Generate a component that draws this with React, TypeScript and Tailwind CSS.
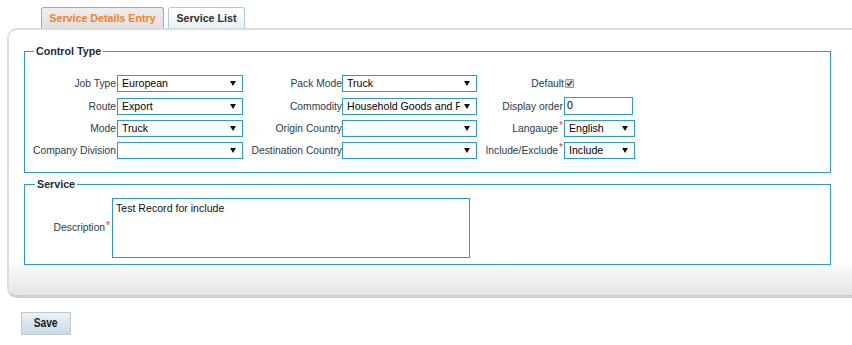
import React from "react";

const Arrow = () => (
  <svg width="6" height="5" viewBox="0 0 6 5" className="shrink-0">
    <path d="M0 0 H6 L3 5 Z" fill="#111" />
  </svg>
);

function Sel({ value, className }: { value: string; className: string }) {
  return (
    <div
      className={
        "flex h-[17px] items-center border border-[#2b9ad2] bg-white pl-[4px] pr-[6px] text-[10.6px] text-black " +
        className
      }
    >
      <span className="min-w-0 flex-1 overflow-hidden whitespace-nowrap leading-[15px]">{value}</span>
      <span className="ml-[4px] flex items-center">
        <Arrow />
      </span>
    </div>
  );
}

function Label({ text, req, className }: { text: string; req?: boolean; className?: string }) {
  return (
    <div className={"flex items-start justify-end whitespace-nowrap text-[10.3px] leading-[17px] text-[#2c3b4b] " + (className || "")}>
      <span>{text}</span>
      {req && <span className="ml-[1px] text-[10px] leading-[12px] text-[#e8312f]">*</span>}
    </div>
  );
}

export default function App() {
  return (
    <div
      className="h-[345px] w-[852px] overflow-hidden bg-white"
      style={{ fontFamily: '"Liberation Sans", Arial, sans-serif' }}
    >
      {/* Tabs */}
      <div className="flex items-end pl-[41px] pt-[7px]">
        <div className="flex h-[21px] w-[123px] items-center justify-center rounded-t-[3px] border border-b-0 border-[#a7a7a7] bg-linear-to-b from-[#eeeeee] to-[#e0e0e0] text-[10.7px] font-bold text-[#f5822a]">
          Service Details Entry
        </div>
        <div className="ml-[4px] flex h-[21px] w-[77px] items-center justify-center rounded-t-[3px] border border-b-0 border-[#a6cfe8] bg-linear-to-b from-[#ffffff] to-[#e7f1f8] text-[10.7px] font-bold text-[#2f2f2f]">
          Service List
        </div>
      </div>

      {/* Panel */}
      <div className="ml-[7px] w-[880px] overflow-hidden rounded-tl-[10px] rounded-bl-[10px] border-t-2 border-b-[3px] border-l-2 border-t-[#dcdcdc] border-b-[#cdcdcd] border-l-[#dedede] bg-white">
        <div className="pl-[15px] pt-[14px]">
          {/* Control Type */}
          <fieldset className="w-[807px] border border-[#2b9ad2] pb-[13px] pt-[17px]">
            <legend className="ml-[9px] px-[2px] text-[10.7px] font-bold leading-[14px] text-[#1c2a3a]">
              Control Type
            </legend>
            <div className="grid grid-cols-[92px_126px_99px_135px_87px_auto] items-center gap-y-[5px]">
              <Label text="Job Type" className="pr-[1px]" />
              <Sel value="European" className="w-[126px]" />
              <Label text="Pack Mode" />
              <Sel value="Truck" className="w-[135px]" />
              <Label text="Default" />
              <div className="flex h-[17px] items-center pl-[1px]">
                <div className="flex h-[9px] w-[9px] items-center justify-center rounded-[1px] border border-[#9a9a9a] bg-[#dcdcdc]">
                  <svg width="7" height="7" viewBox="0 0 7 7">
                    <path d="M1 3.5 L2.8 5.5 L6 1" stroke="#444" strokeWidth="1.4" fill="none" />
                  </svg>
                </div>
              </div>

              <Label text="Route" className="pr-[1px]" />
              <Sel value="Export" className="w-[126px]" />
              <Label text="Commodity" />
              <Sel value="Household Goods and Personal Effects" className="w-[135px]" />
              <Label text="Display order" className="pr-[1px]" />
              <div className="flex h-[18px] w-[69px] items-center border border-[#2b9ad2] bg-white pl-[2px] text-[10.6px] text-black">
                0
              </div>

              <Label text="Mode" className="pr-[1px]" />
              <Sel value="Truck" className="w-[126px]" />
              <Label text="Origin Country" />
              <Sel value="" className="w-[135px]" />
              <Label text="Langauge" req className="pr-[1px]" />
              <Sel value="English" className="w-[71px]" />

              <Label text="Company Division" className="pr-[1px]" />
              <Sel value="" className="w-[126px]" />
              <Label text="Destination Country" />
              <Sel value="" className="w-[135px]" />
              <Label text="Include/Exclude" req className="pr-[1px]" />
              <Sel value="Include" className="w-[71px]" />
            </div>
          </fieldset>

          {/* Service */}
          <fieldset className="mt-[4px] w-[807px] border border-[#2b9ad2] pb-[6px] pt-[7px]">
            <legend className="ml-[10px] px-[2px] text-[10.7px] font-bold leading-[14px] text-[#1c2a3a]">
              Service
            </legend>
            <div className="flex items-center">
              <div className="flex w-[87px] items-start justify-end pr-[2px]">
                <span className="text-[10.3px] leading-[14px] text-[#2c3b4b]">Description</span>
                <span className="ml-[1px] text-[10px] leading-[10px] text-[#e8312f]">*</span>
              </div>
              <div className="h-[60px] w-[358px] border border-[#2b9ad2] bg-white pl-[3px] pt-[2px] text-[10.6px] leading-[14px] text-[#111]">
                Test Record for include
              </div>
            </div>
          </fieldset>
        </div>
        <div className="h-[30px] bg-linear-to-b from-[#fafafa] to-[#e1e4e7]" />
      </div>

      {/* Save */}
      <div className="ml-[21px] mt-[14px]">
        <button className="flex h-[23px] w-[50px] items-center justify-center border border-[#c3cad0] bg-linear-to-b from-[#eaf2f8] to-[#c6dae7] text-[12.5px] font-bold text-[#1a1a1a]">
          <span className="inline-block scale-x-[0.82]">Save</span>
        </button>
      </div>
    </div>
  );
}
